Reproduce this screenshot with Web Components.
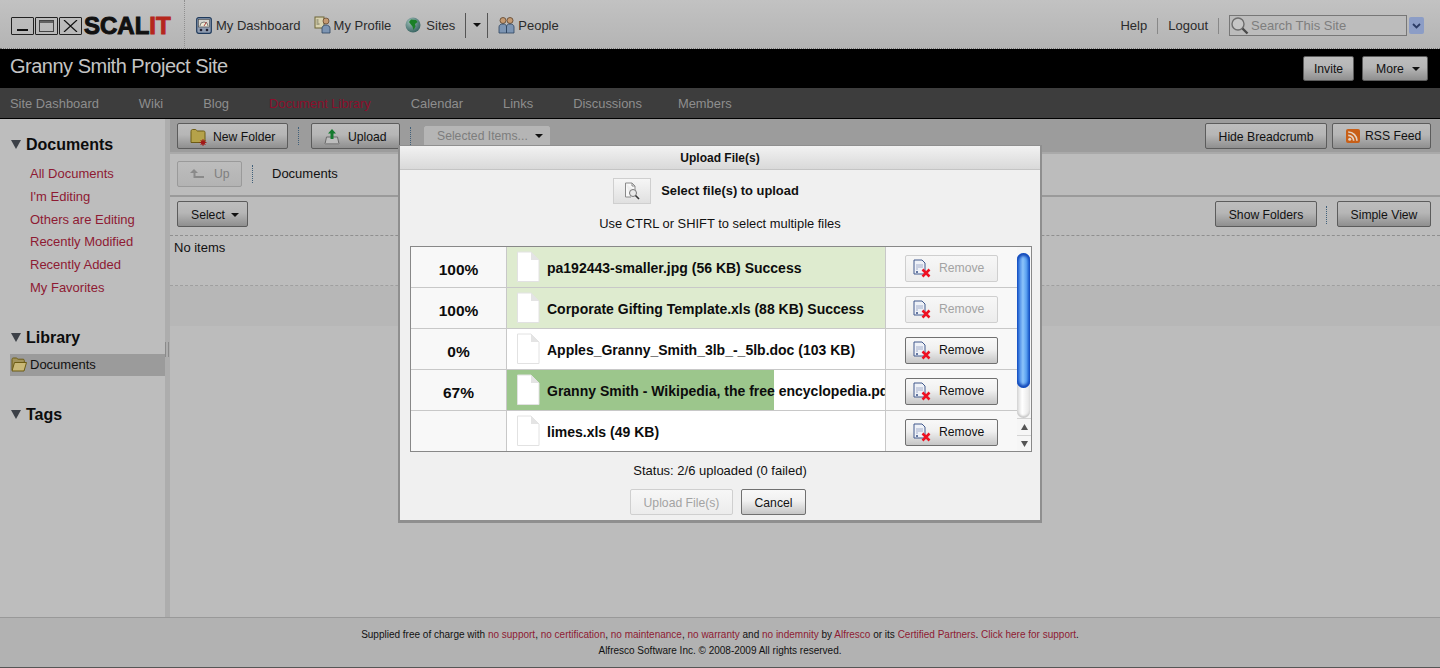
<!DOCTYPE html>
<html>
<head>
<meta charset="utf-8">
<title>Granny Smith Project Site</title>
<style>
html, body { margin: 0; height: 668px; overflow: hidden; background: #bdbdbd; }
body { font-family: "Liberation Sans", Arial, sans-serif; font-size: 13px; color: #111; }
scal-app { height: 668px; }
</style>
</head>
<body>
<scal-app></scal-app>
<script>
// ################## icons ##################
const ICONS = {
    dash: '<svg width="16" height="17" viewBox="0 0 16 17"><rect x=".7" y=".7" width="14.600" height="15.600" rx="2" fill="#8f9cb0" stroke="#1f3a5c" stroke-width="1.200"/><rect x="2.500" y="2.500" width="11" height="7.500" fill="#d6d6d0" stroke="#444" stroke-width=".6"/><path d="M4 9a4 4 0 0 1 8 0" fill="#ece8d4" stroke="#555" stroke-width=".7"/><path d="M8 9 10.500 5" stroke="#a33" stroke-width=".9"/><circle cx="5" cy="13" r="1.300" fill="#223"/><circle cx="11" cy="13" r="1.300" fill="#223"/></svg>',
    profile: '<svg width="18" height="18" viewBox="0 0 18 18"><rect x="1" y="1" width="9" height="11" fill="#d8d2b0" stroke="#6c6436"/><path d="M2.5 4h2M2.5 6h2M2.5 8h3" stroke="#554" stroke-width=".8"/><circle cx="12" cy="5" r="3" fill="#c49a72" stroke="#5b4028" stroke-width=".7"/><path d="M8 17v-4.500c0-2 1.500-3.500 4-3.500s4 1.500 4 3.500V17z" fill="#7d95b3" stroke="#2f4560" stroke-width=".8"/></svg>',
    globe: '<svg width="16" height="16" viewBox="0 0 16 16"><defs><radialGradient id="g" cx=".35" cy=".3" r=".8"><stop offset="0" stop-color="#9dbdb8"/><stop offset="1" stop-color="#2f5c5a"/></radialGradient></defs><circle cx="8" cy="8" r="7.500" fill="url(#g)"/><path d="M6 2.500 11 3l1.500 2L10 7l.5 2.500-2 3.500-1-3.500L5.500 7 4 5z" fill="#1a8026"/></svg>',
    people: '<svg width="17" height="18" viewBox="0 0 17 18"><circle cx="5" cy="4.500" r="3" fill="#c49a72" stroke="#5b4028" stroke-width=".8"/><circle cx="12" cy="4.500" r="3" fill="#c49a72" stroke="#5b4028" stroke-width=".8"/><path d="M1 17v-6c0-2 1.500-3 4-3s3.500 1 3.500 3v6zM8.500 17v-6c0-2 1-3 3.500-3s4 1 4 3v6z" fill="#7d95b3" stroke="#2f4560" stroke-width=".8"/></svg>',
    search: '<svg width="19" height="19" viewBox="0 0 19 19"><circle cx="8" cy="8" r="6" fill="#c6c6c6" stroke="#6d6d6d" stroke-width="1.400"/><path d="M12.500 12.500 17.500 17.500" stroke="#4a4a4a" stroke-width="2.400"/></svg>',
    newFolder: '<svg width="17" height="18" viewBox="0 0 17 18"><path d="M1 3.500c0-1 .5-2 1.500-2h3c1 0 1 1.500 2 1.500h6c1 0 1.500.5 1.500 1.500v10H1z" fill="#b5a24a" stroke="#6d5c14"/><circle cx="13" cy="14.500" r="2.200" fill="#a11818"/><path d="M13 11v7M9.500 14.500h7M10.500 12l5 5M15.500 12l-5 5" stroke="#a11818" stroke-width=".9"/></svg>',
    upload: '<svg width="16" height="18" viewBox="0 0 16 18"><path d="M1 16 2.500 9h11L15 16z" fill="#bdbdbd" stroke="#6a6a6a"/><rect x="1" y="15" width="14" height="2" fill="#8c8c8c"/><path d="M8 1 12 5.500H9.500V11h-3V5.500H4z" fill="#157a2f"/></svg>',
    rss: '<svg width="14" height="14" viewBox="0 0 14 14"><rect width="14" height="14" rx="2" fill="#c85f17"/><circle cx="3.700" cy="10.300" r="1.500" fill="#e4d3c2"/><path d="M2.200 6.300a5.500 5.500 0 0 1 5.500 5.500M2.200 3a8.800 8.800 0 0 1 8.800 8.800" fill="none" stroke="#e4d3c2" stroke-width="1.700"/></svg>',
    up: '<svg width="14" height="10" viewBox="0 0 14 10"><path d="M4 0 8 4H5.500v3H14v2H3.500V4H0z" fill="#8a8a8a"/></svg>',
    folderOpen: '<svg width="16" height="15" viewBox="0 0 16 15"><path d="M1 13V2.500c0-.8.500-1.500 1.300-1.500h3c.8 0 1 1.200 1.800 1.200h5c.8 0 1.200.5 1.200 1.300v1.500" fill="#a2935a" stroke="#6d5c14"/><path d="M1 14 3.500 5.500H15.500L13 14z" fill="#c9b877" stroke="#6d5c14"/></svg>',
    browse: '<svg width="18" height="18" viewBox="0 0 18 18"><path d="M2.500 1H9l3 3v5M2.500 1v14H8" fill="#f8f8f8" stroke="#8a8a8a"/><path d="M9 1v3h3" fill="none" stroke="#8a8a8a"/><circle cx="10" cy="11" r="3.500" fill="#e8e8e8" stroke="#777"/><path d="M12.500 13.500 16 17" stroke="#333" stroke-width="1.600"/></svg>',
    file: '<svg width="24" height="32" viewBox="0 0 24 32"><path d="M1.500 1H15l8 8v21.500H1.500z" fill="#fff" stroke="#e2e2e2"/><path d="M15 1v8h8z" fill="#e4e4e4"/></svg>',
    remove: '<svg width="18" height="19" viewBox="0 0 18 19"><path d="M1 1h8l3 3v11H1z" fill="#eef1f7" stroke="#41598c"/><path d="M3 6h7M3 8h7M3 10h2" stroke="#8fa0c2" stroke-width=".8"/><path d="M3 12l2 2M5 12l-2 2" stroke="#41598c" stroke-width=".8"/><path d="M9.500 10.500l7 7M16.500 10.500l-7 7" stroke="#ee1122" stroke-width="2.500"/></svg>',
    caret: '<svg width="8" height="4" viewBox="0 0 8 4"><path d="M0 0h8L4 4z" fill="#111"/></svg>'
};

// small helper, every element has its own style block
function shadowOf(el, html) {
    const root = el.attachShadow({mode: 'open'});
    root.innerHTML = html;
    return root;
}

class ScalButton extends HTMLElement {
    constructor() {
        super();
        shadowOf(this, `<style>
            :host { display: inline-flex; align-items: center; justify-content: center; box-sizing: border-box; gap: var(--btn-gap, 8px);
                height: var(--btn-h, 26px); padding-top: var(--btn-top, 0); border: 1px solid #5c5c5c; border-radius: 2px; font-size: 12.200px; color: #111;
                background: linear-gradient(#bdbdbd 0%, #b6b6b6 45%, #8f8f8f 100%); white-space: nowrap; flex: none; }
            :host([start]) { justify-content: flex-start; padding-left: var(--btn-pad, 12px); }
            :host([light]) { background: linear-gradient(#f8f8f8 0%, #f0f0f0 45%, #c6c6c6 100%); border-color: #707070; }
            :host([light][off]) { background: linear-gradient(#f7f7f7, #ececec); border-color: #cfcfcf; color: #a3a3a3; }
            :host([off]) { background: linear-gradient(#bdbdbd, #b3b3b3); border-color: #9a9a9a; color: #7f7f7f; }
            :host([faint]) { background: #b5b5b5; border-color: #b5b5b5; color: #7d7d7d; }
        </style><slot></slot>`);
    }
}
customElements.define('scal-button', ScalButton);

class ScalDots extends HTMLElement {
    constructor() {
        super();
        shadowOf(this, `<style>
            :host { display: block; width: 0; height: 18px; border-left: 1px dotted #40607a; flex: none; }
        </style>`);
    }
}
customElements.define('scal-dots', ScalDots);

class ScalHeader extends HTMLElement {
    constructor() {
        super();
        shadowOf(this, `<style>
            :host { display: flex; align-items: center; box-sizing: border-box; height: 49px; padding: 2px 0 0 10px;
                background: linear-gradient(#c2c2c2, #b4b4b4); border-bottom: 1px dotted #777; color: #2b2b2b; }
            .logo { display: flex; align-items: center; align-self: flex-start; width: 175px; height: 48px; margin-top: -2px; padding: 4px 0 0 1px; flex: none; border-right: 1px dotted #8f8f8f; box-sizing: border-box; }
            .win { width: 23px; height: 18px; box-sizing: border-box; border: 1px solid #222; margin-right: 1px; border-radius: 1px; display: flex; align-items: center; justify-content: center; flex: none; }
            .word { font: bold 24px "Liberation Sans", sans-serif; -webkit-text-stroke: 1px #111; color: #111; margin-left: 1px; line-height: 20px; }
            .word b { color: #b5271c; -webkit-text-stroke: 1px #b5271c; }
            .item { display: flex; align-items: center; gap: 5px; height: 22px; flex: none; }
            .sep { width: 1px; height: 25px; background: #555; flex: none; }
            .right { margin: 1px 0 0 auto; display: flex; align-items: center; }
            .thin { width: 1px; height: 16px; background: #888; margin: 0 10px; }
            .box { box-sizing: border-box; width: 178px; height: 21px; border: 1px solid #777; background: #bcbcbc; display: flex; align-items: center; gap: 2px; color: #7e7e7e; }
            .drop { width: 15px; height: 17px; margin: 0 16px 0 2px; background: #8c9dc6; border-radius: 2px; display: flex; align-items: center; justify-content: center; }
        </style>
        <div class="logo">
            <span class="win"><svg width="15" height="12" viewBox="0 0 15 12"><path d="M2 10h11" stroke="#111" stroke-width="2"/></svg></span>
            <span class="win"><svg width="15" height="12" viewBox="0 0 15 12"><rect x=".5" y=".5" width="14" height="11" fill="none" stroke="#444"/><path d="M1 2h13" stroke="#444" stroke-width="1.500"/></svg></span>
            <span class="win"><svg width="15" height="12" viewBox="0 0 15 12"><path d="M1 0 14 12M14 0 1 12" stroke="#111" stroke-width="1.200"/></svg></span>
            <span class="word">SCAL<b>IT</b></span>
        </div>
        <div class="item" style="margin-left:11px;gap:4px">${ICONS.dash}<span>My Dashboard</span></div>
        <div class="item" style="margin-left:13px;gap:2px">${ICONS.profile}<span>My Profile</span></div>
        <div class="item" style="margin-left:14px;gap:5px">${ICONS.globe}<span>Sites</span></div>
        <div class="sep" style="margin-left:10px"></div>
        <div class="item" style="width:21px;justify-content:center">${ICONS.caret}</div>
        <div class="sep"></div>
        <div class="item" style="margin-left:10px;gap:3px">${ICONS.people}<span>People</span></div>
        <div class="right">
            <span>Help</span><span class="thin"></span><span>Logout</span><span class="thin"></span>
            <div class="box">${ICONS.search}<span>Search This Site</span></div>
            <div class="drop"><svg width="9" height="6" viewBox="0 0 9 6"><path d="M1 1l3.500 3.500L8 1" fill="none" stroke="#2c3c66" stroke-width="1.800"/></svg></div>
        </div>`);
    }
}
customElements.define('scal-header', ScalHeader);

class SiteBar extends HTMLElement {
    constructor() {
        super();
        shadowOf(this, `<style>
            :host { display: flex; align-items: center; height: 39px; padding: 0 12px 0 10px; background: #000; flex: none; }
            h1 { margin: 0 0 6px; font: normal 20px/34px "Liberation Sans", sans-serif; letter-spacing: -.5px; color: #c4c4c4; flex: 1; }
            .more { margin-left: 8px; }
        </style>
        <h1>Granny Smith Project Site</h1>
        <scal-button style="width:51px;--btn-h:25px">Invite</scal-button>
        <scal-button class="more" start style="width:66px;--btn-h:25px;--btn-pad:13px;--btn-gap:8px">More ${ICONS.caret}</scal-button>`);
    }
}
customElements.define('site-bar', SiteBar);

class SiteNav extends HTMLElement {
    constructor() {
        super();
        const items = ['Site Dashboard', 'Wiki', 'Blog', 'Document Library', 'Calendar', 'Links', 'Discussions', 'Members'];
        let html_str = '';
        for (let i in items) {
            html_str += '<span' + (items[i] == 'Document Library' ? ' class="on"' : '') + '>' + items[i] + '</span>';
        }
        shadowOf(this, `<style>
            :host { display: flex; align-items: center; gap: 40px; box-sizing: border-box; height: 31px; padding-left: 10px; background: #3d3d3d; border-bottom: 1px solid #000; color: #8e8e8e; font-size: 12.900px; flex: none; }
            .on { color: #8c0f2c; }
            span:last-child { margin-left: -4px; }
        </style>` + html_str);
    }
}
customElements.define('site-nav', SiteNav);

class DocSidebar extends HTMLElement {
    constructor() {
        super();
        shadowOf(this, `<style>
            :host { display: block; box-sizing: border-box; width: 170px; flex: none; background: #bdbdbd; border-right: 5px solid #adadad; padding-top: 16px; position: relative; }
            h2 { margin: 0; font: bold 16px/20px "Liberation Sans", sans-serif; color: #0c0c0c; padding-left: 11px; display: flex; align-items: center; gap: 5px; }
            h2 i { width: 0; height: 0; border-left: 5px solid transparent; border-right: 5px solid transparent; border-top: 9px solid #3d4148; margin-top: -1px; }
            ul { list-style: none; margin: 9px 0 0; padding: 0 0 0 30px; color: #8e1a33; }
            li { height: 22.800px; line-height: 20px; }
            .lib { margin-top: 27px; }
            .sel { display: flex; align-items: center; gap: 3px; height: 22px; margin: 6px 0 0 10px; padding-left: 1px; background: #9b9b9b; color: #111; }
            .tags { margin-top: 29px; }
            .grip { position: absolute; right: -4px; top: 223px; width: 2px; height: 15px; border: solid #8a8a8a; border-width: 0 1px; }
        </style>
        <h2><i></i>Documents</h2>
        <ul><li>All Documents</li><li>I'm Editing</li><li>Others are Editing</li><li>Recently Modified</li><li>Recently Added</li><li>My Favorites</li></ul>
        <h2 class="lib"><i></i>Library</h2>
        <div class="sel">${ICONS.folderOpen}<span>Documents</span></div>
        <h2 class="tags"><i></i>Tags</h2>
        <div class="grip"></div>`);
    }
}
customElements.define('doc-sidebar', DocSidebar);

class DocMain extends HTMLElement {
    constructor() {
        super();
        shadowOf(this, `<style>
            :host { display: flex; flex-direction: column; flex: 1; min-width: 0; background: #bcbcbc; color: #111; }
            .bar { display: flex; align-items: center; }
            .tools { height: 35px; box-sizing: border-box; padding: 1px 9px 0 7px; background: #9c9c9c; border-bottom: 2px solid #a9a9a9; --btn-top: 2px; }
            .crumb { height: 43px; box-sizing: border-box; padding: 0 7px 2px; border-bottom: 2px solid #9a9a9a; }
            .sel { height: 39px; box-sizing: border-box; padding: 4px 9px 0 7px; align-items: flex-start; border-bottom: 1px dashed #8f8f8f; --btn-top: 2px; }
            .none { height: 50px; box-sizing: border-box; padding: 4px; border-bottom: 1px dashed #9f9f9f; }
            .band { height: 40px; background: #b7b7b7; }
            .grow { flex: 1; }
        </style>
        <div class="bar tools">
            <scal-button start style="width:111px;--btn-gap:6px">${ICONS.newFolder}New Folder</scal-button>
            <scal-dots style="margin:0 12px 0 10px"></scal-dots>
            <scal-button start style="width:89px;--btn-gap:8px">${ICONS.upload}Upload</scal-button>
            <scal-dots style="margin:0 13px 0 10px"></scal-dots>
            <scal-button faint start style="width:126px;--btn-h:21px;--btn-gap:7px;--btn-top:0">Selected Items... ${ICONS.caret}</scal-button>
            <span class="grow"></span>
            <scal-button style="width:122px">Hide Breadcrumb</scal-button>
            <scal-button start style="width:99px;margin-left:5px;--btn-pad:13px;--btn-gap:5px;--btn-top:0">${ICONS.rss}RSS Feed</scal-button>
        </div>
        <div class="bar crumb">
            <scal-button off start style="width:65px;--btn-gap:10px">${ICONS.up}Up</scal-button>
            <scal-dots style="margin:0 19px 0 10px"></scal-dots>
            <span>Documents</span>
        </div>
        <div class="bar sel">
            <scal-button start style="width:71px;--btn-pad:13px;--btn-gap:6px">Select ${ICONS.caret}</scal-button>
            <span class="grow"></span>
            <scal-button style="width:102px">Show Folders</scal-button>
            <scal-dots style="margin:5px 10px 0 9px"></scal-dots>
            <scal-button style="width:94px">Simple View</scal-button>
        </div>
        <div class="none">No items</div>
        <div class="band"></div>`);
    }
}
customElements.define('doc-main', DocMain);

class PageFooter extends HTMLElement {
    constructor() {
        super();
        shadowOf(this, `<style>
            :host { display: block; box-sizing: border-box; height: 51px; padding-top: 9px; background: #b2b2b2; border-top: 1px solid #999; border-bottom: 1px solid #555; text-align: center; font-size: 10px; line-height: 16px; color: #111; flex: none; }
            b { font-weight: normal; color: #8e1a33; }
        </style>
        <div>Supplied free of charge with <b>no support</b>, <b>no certification</b>, <b>no maintenance</b>, <b>no warranty</b> and <b>no indemnity</b> by <b>Alfresco</b> or its <b>Certified Partners</b>. <b>Click here for support</b>.</div>
        <div>Alfresco Software Inc. © 2008-2009 All rights reserved.</div>`);
    }
}
customElements.define('page-footer', PageFooter);

class UploadRow extends HTMLElement {
    constructor() {
        super();
        const pct = this.getAttribute('pct') || '';
        const off = this.hasAttribute('done') ? 'off' : '';
        shadowOf(this, `<style>
            :host { display: grid; grid-template-columns: 96px 378px 132px; height: 41px; box-sizing: border-box; border-bottom: 1px solid #c8c8c8; font-weight: bold; color: #0c0c0c; }
            :host(:last-child) { height: 40px; border-bottom: 0; }
            .pct { display: flex; align-items: center; justify-content: center; font-size: 15.500px; background: #f8f8f8; border-right: 1px solid #c8c8c8; padding-top: 6px; }
            .file { display: flex; align-items: center; gap: 7px; padding-left: 9px; overflow: hidden; white-space: nowrap; font-size: 14px; background: #fff; }
            .file span { padding-top: 2px; }
            :host([done]) .file { background: #deebcf; }
            :host([progress]) .file { background: linear-gradient(90deg, #9cc68c 267px, #fff 267px); }
            .file svg { flex: none; }
            .act { display: flex; align-items: center; background: #f8f8f8; border-left: 1px solid #c8c8c8; padding: 2px 0 0 19px; font-weight: normal; }
        </style>
        <div class="pct">${pct}</div>
        <div class="file">${ICONS.file}<span><slot></slot></span></div>
        <div class="act"><scal-button light start ${off} style="width:93px;--btn-h:27px;--btn-pad:7px;--btn-gap:8px">${ICONS.remove}<span>Remove</span></scal-button></div>`);
    }
}
customElements.define('upload-row', UploadRow);

class UploadDialog extends HTMLElement {
    constructor() {
        super();
        shadowOf(this, `<style>
            :host { position: absolute; left: 400px; top: 146px; width: 640px; height: 374px; box-sizing: border-box; background: #f0f0f0; color: #111; box-shadow: 0 1px 0 2px #8f8f8f; display: flex; flex-direction: column; }
            .title { height: 24px; flex: none; box-sizing: border-box; border-bottom: 1px solid #c4c4c4; background: linear-gradient(#f2f2f2, #d9d9d9); text-align: center; font: bold 12px/25px "Liberation Sans", sans-serif; }
            .pick { display: flex; align-items: center; justify-content: center; gap: 10px; height: 26px; margin-top: 8px; padding-right: 28px; font-weight: bold; font-size: 12.900px; }
            .pick span:last-child { margin-top: -2px; }
            .pick .b { width: 38px; height: 26px; box-sizing: border-box; border: 1px solid #cfcfcf; background: linear-gradient(#f6f6f6, #e0e0e0); display: flex; align-items: center; justify-content: center; }
            .hint { text-align: center; font-size: 12.900px; line-height: 16px; margin-top: 12px; }
            .table { display: flex; margin: 14px 8px 0 10px; height: 206px; box-sizing: border-box; border: 1px solid #888; background: #fff; }
            .rows { width: 606px; flex: none; }
            .scroll { flex: 1; background: #f6f6f6; display: flex; flex-direction: column; box-sizing: border-box; padding-top: 6px; }
            .track { width: 13px; height: 165px; flex: none; border-radius: 7px; background: linear-gradient(90deg, #d8d8d8, #fff 40%, #e4e4e4); box-shadow: inset 0 -2px 2px #c8c8c8; }
            .thumb { height: 135px; border-radius: 7px; background: linear-gradient(90deg, #1f63d8, #8cc4fa 45%, #5ea4f2 70%, #1a5cd0); box-shadow: inset 0 -3px 3px #1348b8, inset 0 3px 3px #1348b8; }
            .arrow { height: 16px; display: flex; align-items: center; justify-content: center; flex: none; border-top: 1px solid #d4d4d4; }
            .status { text-align: center; line-height: 16px; margin-top: 11px; }
            .acts { display: flex; justify-content: center; gap: 8px; margin-top: 10px; padding-right: 4px; --btn-top: 2px; }
        </style>
        <div class="title">Upload File(s)</div>
        <div class="pick"><span class="b">${ICONS.browse}</span><span>Select file(s) to upload</span></div>
        <div class="hint">Use CTRL or SHIFT to select multiple files</div>
        <div class="table">
            <div class="rows"><slot></slot></div>
            <div class="scroll">
                <div class="track"><div class="thumb"></div></div>
                <span style="flex:1"></span>
                <div class="arrow"><svg width="7" height="6" viewBox="0 0 7 6"><path d="M3.500 0 7 6H0z" fill="#555"/></svg></div>
                <div class="arrow"><svg width="7" height="6" viewBox="0 0 7 6"><path d="M0 0h7L3.500 6z" fill="#555"/></svg></div>
            </div>
        </div>
        <div class="status">Status: 2/6 uploaded (0 failed)</div>
        <div class="acts">
            <scal-button light off style="width:103px;--btn-h:26px">Upload File(s)</scal-button>
            <scal-button light style="width:65px;--btn-h:26px">Cancel</scal-button>
        </div>`);
    }
}
customElements.define('upload-dialog', UploadDialog);

class ScalApp extends HTMLElement {
    constructor() {
        super();
        shadowOf(this, `<style>
            :host { display: flex; flex-direction: column; position: relative; width: 1440px; height: 668px; overflow: hidden; }
            .body { display: flex; flex: 1; min-height: 0; }
        </style>
        <scal-header></scal-header>
        <site-bar></site-bar>
        <site-nav></site-nav>
        <div class="body"><doc-sidebar></doc-sidebar><doc-main></doc-main></div>
        <page-footer></page-footer>
        <upload-dialog>
            <upload-row pct="100%" done>pa192443-smaller.jpg (56 KB) Success</upload-row>
            <upload-row pct="100%" done>Corporate Gifting Template.xls (88 KB) Success</upload-row>
            <upload-row pct="0%">Apples_Granny_Smith_3lb_-_5lb.doc (103 KB)</upload-row>
            <upload-row pct="67%" progress>Granny Smith - Wikipedia, the free encyclopedia.pdf</upload-row>
            <upload-row>limes.xls (49 KB)</upload-row>
        </upload-dialog>`);
    }
}
customElements.define('scal-app', ScalApp);
</script>
</body>
</html>
